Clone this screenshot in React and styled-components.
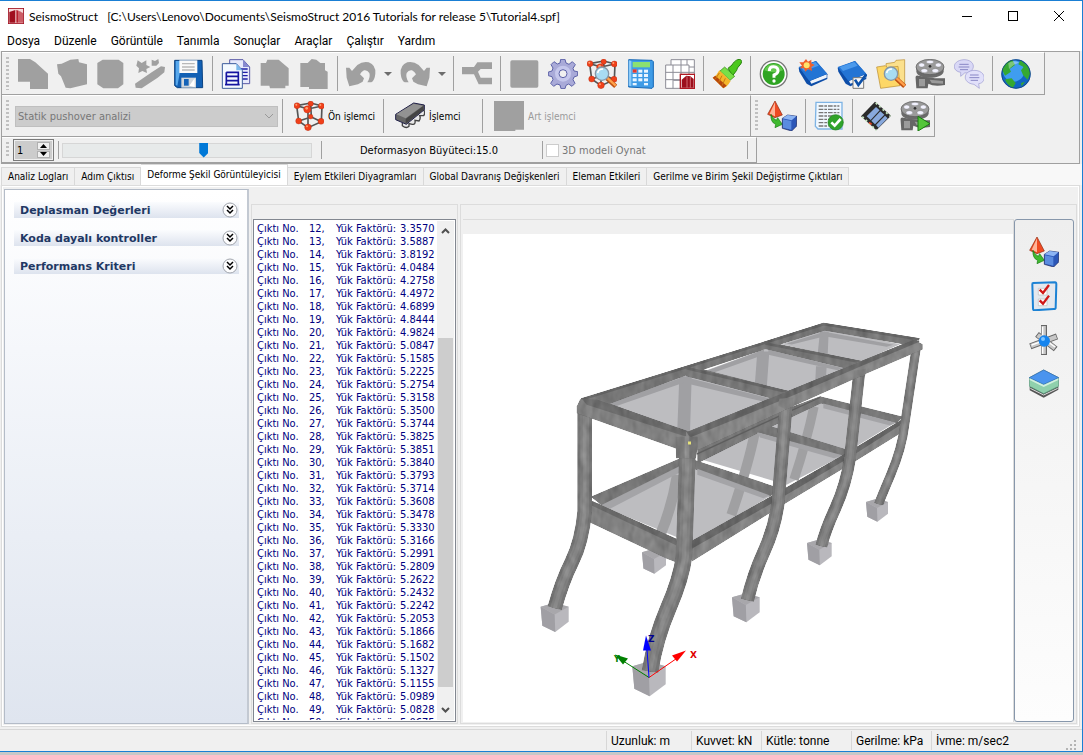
import { useState } from "react";
import styled, { createGlobalStyle } from "styled-components";

const GlobalStyle = createGlobalStyle`
  * {
    box-sizing: border-box;
  }

  body {
    margin: 0;
    background: #c8c8c8;
    color: #000;
    font-family: "DejaVu Sans Condensed", "Noto Sans", sans-serif;
    font-size: 11px;
    line-height: 13px;
  }

  button, input, select {
    font: inherit;
    color: inherit;
  }
`;

const Desktop = styled.div`
  display: flex;
  flex-direction: column;
  height: 100vh;
  padding-bottom: 3px;
`;

const Window = styled.div`
  flex: 1;
  min-height: 0;
  display: flex;
  flex-direction: column;
  background: #f0f0f0;
  border: 1px solid #1a7fd4;
  border-left: 0;
`;

const TitleBar = styled.header`
  display: flex;
  align-items: center;
  height: 30px;
  padding-left: 8px;
  background: #fff;
`;

const Title = styled.h1`
  flex: 1;
  margin: 0;
  padding-left: 5px;
  font-family: Lato, sans-serif;
  font-size: 12px;
  font-weight: 400;
  white-space: pre;
`;

const CaptionButton = styled.button`
  width: 46px;
  height: 29px;
  padding: 0;
  border: 0;
  background: none;

  svg {
    display: block;
    margin: auto;
  }
`;

const MenuBar = styled.nav`
  display: flex;
  height: 20px;
  background: #fff;
  font-family: Roboto, sans-serif;
  font-size: 12px;
`;

const MenuItem = styled.button`
  padding: 0 7px;
  border: 0;
  background: none;
`;

const ToolArea = styled.div`
  margin: 0 2px 0 1px;
  border: 1px solid #a0a0a0;
`;

const BarRow = styled.div`
  display: flex;
`;

const Bar = styled.div`
  display: flex;
  align-items: center;
  height: ${(props) => props.$height || 42}px;
  width: ${(props) => props.$width || "auto"};
  padding: 0 ${(props) => props.$end || 0}px 0 4px;
  border-top: 1px solid #fff;
  border-right: 1px solid #a0a0a0;
  border-bottom: 1px solid #a0a0a0;
`;

const Grip = styled.span`
  flex: none;
  width: 3px;
  align-self: stretch;
  margin: 4px 4px 4px 0;
  background: repeating-linear-gradient(#c0c0c0 0 2px, transparent 2px 4px);
`;

const Separator = styled.span`
  flex: none;
  width: 8px;
  align-self: stretch;
  margin: 3px 0;
  background: linear-gradient(#a0a0a0, #a0a0a0) center / 1px 100% no-repeat;
`;

const ToolButton = styled.button`
  flex: none;
  display: flex;
  align-items: center;
  justify-content: ${(props) => (props.$wide ? "flex-start" : "center")};
  gap: 4px;
  width: ${(props) => props.$wide || 39}px;
  height: 38px;
  padding: 0 0 0 ${(props) => (props.$wide ? 8 : 0)}px;
  border: 0;
  background: none;
  font-size: 10px;
  white-space: nowrap;

  &:disabled {
    color: #9a9a9a;
  }
`;

const DropArrow = styled.button`
  width: 15px;
  height: 38px;
  padding: 0;
  border: 0;
  background: none;

  &::before {
    content: "";
    display: block;
    width: 0;
    margin: auto;
    border: 4px solid transparent;
    border-top-color: #6d6d6d;
    border-bottom: 0;
  }
`;

const ComboBox = styled.div`
  position: relative;
  width: 263px;
  margin-left: 2px;

  select {
    display: block;
    width: 100%;
    height: 21px;
    padding: 0 2px;
    border: 1px solid #bfbfbf;
    border-radius: 0;
    background: #ccc;
    color: #777;
    opacity: 1;
    appearance: none;
  }

  svg {
    position: absolute;
    right: 4px;
    top: 7px;
    pointer-events: none;
  }
`;

const SpinBox = styled.div`
  display: flex;
  width: 41px;
  height: 22px;
  padding: 1px;
  border: 1px solid #7a7a7a;
  background: #ccc;
  box-shadow: inset 0 0 0 1px #f0f0f0;

  input {
    flex: 1;
    min-width: 0;
    padding: 0 2px;
    border: 0;
    background: none;
    appearance: textfield;
  }

  input::-webkit-inner-spin-button {
    display: none;
  }
`;

const SpinButtons = styled.div`
  display: grid;
  grid-template-rows: 1fr 1fr;
  gap: 1px;
  padding: 1px 2px;

  button {
    display: grid;
    place-items: center;
    width: 13px;
    padding: 0;
    border: 1px solid #b0b0b0;
    background: #f0f0f0;
  }
`;

const Slider = styled.input`
  width: 250px;
  height: 15px;
  margin: 0 5px 0 0;
  border: 1px solid #d6d6d6;
  background: #e7eaea;
  appearance: none;

  &::-webkit-slider-thumb {
    appearance: none;
    width: 9px;
    height: 15px;
    background: #0078d7;
    clip-path: polygon(0 0, 100% 0, 100% 70%, 50% 100%, 0 70%);
  }
`;

const Magnifier = styled.output`
  width: 213px;
  padding-left: 35px;
`;

const CheckLabel = styled.label`
  display: flex;
  align-items: center;
  gap: 3px;
  width: 197px;
  color: #777;

  input {
    width: 13px;
    height: 13px;
    margin: 0;
    border: 1px solid #ccc;
    background: #fff;
    appearance: none;
  }
`;

const TabStrip = styled.div`
  display: flex;
  align-items: flex-end;
  height: 21px;
  padding-left: 1px;
  background: #f8f8f8;
`;

const Tab = styled.button`
  height: ${(props) => (props.$active ? 21 : 18)}px;
  padding: 0 6px ${(props) => (props.$active ? 2 : 0)}px;
  border: 1px solid #d9d9d9;
  border-bottom: 0;
  border-left-width: ${(props) => (props.$first ? 1 : 0)}px;
  background: ${(props) => (props.$active ? "#fff" : "#f0f0f0")};
  font-size: 10px;
  white-space: nowrap;
`;

const Page = styled.main`
  flex: 1;
  min-height: 0;
  display: flex;
  gap: 2px;
  margin: 0 2px 2px 1px;
  padding: 3px 2px 2px;
  border: 1px solid #dcdcdc;
  box-shadow: inset 0 0 0 1px #fff;
`;

const SidePanel = styled.aside`
  flex: none;
  width: 245px;
  padding: 12px 8px 0 9px;
  border: 1px solid #b4bcc8;
  border-right: 2px solid #c3c9d2;
  background: linear-gradient(#fff, #f5f7fb 30%, #dfe5ef);
`;

const Section = styled.button`
  display: flex;
  align-items: center;
  justify-content: space-between;
  width: 100%;
  height: 16px;
  margin-bottom: 12px;
  padding: 0 1px 0 6px;
  border: 0;
  background: linear-gradient(#fbfcfe, #dde3ee);
  color: #1f3864;
  font-family: "DejaVu Sans", sans-serif;
  font-size: 11px;
  font-weight: 700;
`;

const Frame = styled.section`
  flex: ${(props) => (props.$width ? "none" : 1)};
  width: ${(props) => props.$width || "auto"};
  min-width: 0;
  display: flex;
  flex-direction: column;
  margin-top: 15px;
  padding: 14px ${(props) => (props.$width ? 1 : 2)}px 1px;
  border: 1px solid #dcdcdc;
`;

const ListBox = styled.div`
  flex: 1;
  min-height: 0;
  display: flex;
  border: 1px solid #828790;
  background: #fff;
  padding: 1px;
`;

const Steps = styled.ul`
  flex: 1;
  margin: 0;
  padding: 1px 0 0 2px;
  overflow: hidden;
  list-style: none;
  color: #000080;
`;

const Step = styled.li`
  display: grid;
  grid-template-columns: 52px 27px 64px 1fr;
  height: 13px;
  white-space: nowrap;
`;

const ScrollBar = styled.div`
  display: flex;
  flex-direction: column;
  align-items: center;
  width: 17px;
  padding: 7px 1px;
  background: #f0f0f0;
`;

const ScrollTrack = styled.div`
  flex: 1;
  display: flex;
  flex-direction: column;
  align-self: stretch;
  padding: 104px 0 20px;

  &::before {
    content: "";
    flex: 1;
    background: #cdcdcd;
  }
`;

const Viewer = styled.div`
  flex: 1;
  min-height: 0;
  display: flex;
`;

const Stage = styled.div`
  flex: 1;
  min-width: 0;
  display: flex;
  padding-top: 14px;
  border-top: 1px solid #dcdcdc;
  border-right: 1px solid #dcdcdc;

  svg {
    flex: 1;
    min-width: 0;
    height: 100%;
    background: #fff;
  }
`;

const ViewTools = styled.div`
  display: flex;
  flex-direction: column;
  align-items: center;
  gap: 14px;
  width: 60px;
  padding-top: 17px;
  border: 1px solid #8797ab;
  border-radius: 3px;
  background: linear-gradient(#eee, #fdfdfd);

  button {
    height: 30px;
    padding: 0;
    border: 0;
    background: none;
  }
`;

const StatusBar = styled.footer`
  display: flex;
  justify-content: flex-end;
  align-items: center;
  height: 22px;
  padding-right: 4px;
  border-top: 1px solid #d7d7d7;
  font-family: Roboto, sans-serif;
  font-size: 12px;
`;

const StatusCell = styled.span`
  width: ${(props) => props.$width}px;
  height: 19px;
  padding-left: 4px;
  border-left: 1px solid #d7d7d7;
  line-height: 20px;
  white-space: nowrap;
`;

const SizeGrip = styled.svg`
  align-self: flex-end;
`;

const grey = "#a0a0a0";

const lattice = (
  <>
    <g stroke="#555" strokeWidth="5" fill="none">
      <path d="M8 14 50 6 84 15 82 62 42 80 14 60ZM8 14 42 24 84 15M42 24V80M50 6 52 48 82 62M52 48 14 60" />
    </g>
    <g fill="#f0401a" stroke="#a82008" strokeWidth="1">
      <circle cx="9" cy="14" r="9" />
      <circle cx="50" cy="8" r="8" />
      <circle cx="82" cy="15" r="9" />
      <circle cx="40" cy="25" r="11" />
      <circle cx="14" cy="60" r="9" />
      <circle cx="50" cy="47" r="7" />
      <circle cx="81" cy="61" r="9" />
      <circle cx="42" cy="79" r="10" />
    </g>
    <g fill="#ffa070">
      <circle cx="7" cy="11" r="3" />
      <circle cx="38" cy="22" r="4" />
      <circle cx="79" cy="12" r="3" />
      <circle cx="39" cy="76" r="3" />
    </g>
  </>
);

const reel = (
  <>
    <path d="M10 50Q0 48 2 60L4 88H38L40 74Q56 84 90 78V58H60Z" fill="#666" />
    <path d="M12 60H30V82H12ZM44 62 84 66V74L50 72Z" fill="#9b9b9b" />
    <path d="M4 24V38C8 62 80 62 86 38V24Z" fill="#6b6b6b" />
    <ellipse cx="45" cy="24" rx="42" ry="23" fill="#9b9b9b" stroke="#555" strokeWidth="2" />
    <g fill="#f3f3ff" stroke="#666" strokeWidth="1">
      <ellipse cx="45" cy="9" rx="11" ry="5" />
      <ellipse cx="20" cy="18" rx="9" ry="6" />
      <ellipse cx="70" cy="18" rx="9" ry="6" />
      <ellipse cx="28" cy="35" rx="10" ry="6" />
      <ellipse cx="61" cy="35" rx="10" ry="6" />
    </g>
    <circle cx="45" cy="22" r="4" fill="#333" />
  </>
);

const lens = (
  <>
    <path d="M60 58 86 82" stroke="#c05010" strokeWidth="13" />
    <path d="M60 56 86 80" stroke="#ffa04a" strokeWidth="7" />
    <circle cx="45" cy="44" r="20" fill="#a8dcf2" stroke="#8796a4" strokeWidth="4" />
    <path d="M32 42Q34 30 48 30" stroke="#fff" strokeWidth="5" fill="none" />
  </>
);

const book = (
  <>
    <path d="M2 26 54 6 88 46 88 60 40 82 26 74 4 38Z" fill="#0d4da8" />
    <path d="M36 66 86 46V56L40 74Z" fill="#eef3fa" />
    <path d="M2 24 54 6 88 44 34 66Z" fill="#2374d4" />
    <path d="M8 24 52 9 62 20 18 36Z" fill="#4c9aec" />
  </>
);

const backArrow = (
  <path
    fill={grey}
    d="M0 26H10L18 36 34 18Q50 6 68 10 90 18 88 44 86 64 76 70H64Q74 54 70 42 64 32 54 34 46 38 42 46L54 58 50 68 36 76 10 82 2 56Z"
  />
);

const icons = {
  newFile: <path fill={grey} d="M0 0H36L52 10 90 44V90H36V68H0Z" />,
  openFile: <path fill={grey} d="M0 16 14 14 40 2 64 0 66 10 90 16V76L40 88 26 86 12 52 4 44Z" />,
  database: <path fill={grey} d="M4 12 20 2H68L82 12V76L66 88H22L4 76Z" />,
  wizard: (
    <path
      fill={grey}
      d="M8 4 20 12 34 4 34 18 46 24 34 30 36 42 22 36 10 42 12 28 4 20ZM50 2 60 6 70 0 72 12 64 20 50 20ZM78 22 90 24 88 40 68 56 20 88 2 86 0 74 50 40Z"
    />
  ),
  save: (
    <>
      <path d="M2 4H84L86 86H10L2 80Z" fill="#1260b4" stroke="#0b4280" strokeWidth="3" />
      <path d="M5 6H24L10 80 5 78Z" fill="#58a8ec" />
      <path d="M16 4H70V42H16Z" fill="#fafafa" />
      <path d="M24 14H62M24 24H62M24 33H62" stroke="#b9b9b9" strokeWidth="4" />
      <path d="M22 56H66V86H22Z" fill="#d0d6dc" />
      <path d="M30 60H44V80H30Z" fill="#1463b8" />
      <path d="M46 80 62 58V84Z" fill="#fff" />
    </>
  ),
  copyDocs: (
    <>
      <path d="M26 2H66L86 24V74H26Z" fill="#e7e9fb" stroke="#5a5aa6" strokeWidth="3" />
      <path d="M66 2V24H86Z" fill="#8789cf" />
      <path d="M58 30H80M58 40H80M58 50H80M58 60H80" stroke="#2020a8" strokeWidth="4" />
      <path d="M4 14H46L64 34V88H4Z" fill="#f4faff" stroke="#3c5c9c" strokeWidth="3" />
      <path d="M46 14V34H64Z" fill="#7cb8ec" />
      <path d="M16 40H52V78M16 40V78M16 52H52M16 65H52M12 77H56" stroke="#1414a0" strokeWidth="5" fill="none" />
    </>
  ),
  pasteA: <path fill={grey} d="M2 12H18L22 2H56L86 28V80H76V88L30 88 28 80H2Z" />,
  pasteB: <path fill={grey} d="M4 12H26L38 0 52 2 64 12H78V34L86 38V90H30V84H4Z" />,
  undo: backArrow,
  redo: <g transform="translate(90 0) scale(-1 1)">{backArrow}</g>,
  tree: <path fill={grey} d="M0 24H36L46 10H90V30H56L48 38 56 56H90V76H50L36 46H0Z" />,
  block: <rect fill={grey} x="4" y="4" width="84" height="82" rx="5" />,
  gear: (
    <>
      <path
        d="M36 12 38 1H51L54 12 63 16 73 8 82 17 75 28 78 36 89 38V50L78 54 75 62 81 73 72 82 62 75 54 79 51 89H39L36 78 27 75 17 82 8 73 15 62 12 53 1 50V39L12 36 15 27 9 17 18 8 28 15Z"
        fill="#a9aad8"
        stroke="#5d62a8"
        strokeWidth="3"
      />
      <circle cx="45" cy="44" r="24" fill="#c5c7ec" />
      <circle cx="45" cy="44" r="12" fill="#f0f0f0" stroke="#5d62a8" strokeWidth="3" />
    </>
  ),
  lattice,
  latticeZoom: (
    <>
      {lattice}
      {lens}
    </>
  ),
  calculator: (
    <>
      <path d="M8 2 78 4 82 8V84L78 88 8 84Z" fill="#3e9be6" stroke="#1667b4" strokeWidth="3" />
      <path d="M8 4 16 6V82L8 80Z" fill="#8ccbfa" />
      <path d="M20 9H72V25H20Z" fill="#8ce070" />
      <g fill="#e9f5ff">
        {[40, 53, 66].map((y) =>
          [20, 37, 54].map((x) => <rect key={x + "-" + y} x={x} y={y - 8} width="12" height="9" />)
        )}
        <rect x="20" y="72" width="12" height="7" />
        <rect x="54" y="72" width="12" height="7" />
      </g>
      <rect x="20" y="31" width="12" height="10" fill="#e0372c" />
    </>
  ),
  sheet: (
    <>
      <path d="M18 2H88V44H44V88H2V18H18Z" fill="#fff" />
      <path
        d="M18 2H88V50M18 2V18M2 18H72V46M2 18V88H46M2 40H88M2 62H46M24 18V88M48 2V50M66 2V18M88 24H72M25 64H46"
        fill="none"
        stroke="#8c8c96"
        strokeWidth="3"
      />
      <rect x="46" y="46" width="43" height="42" fill="#fff" stroke="#b01822" strokeWidth="4" />
      <path d="M50 62 64 50 76 52 86 60V86H50Z" fill="#9c0f1c" />
      <path d="M66 52V86M76 54V86" stroke="#ee9aa0" strokeWidth="2" />
    </>
  ),
  brush: (
    <>
      <path d="M48 28 60 18C70 0 88-4 89 8 88 18 74 24 74 34L62 50Z" fill="#4cc81e" stroke="#27820c" strokeWidth="3" />
      <path d="M38 24 68 52 54 64 24 36Z" fill="#79e048" stroke="#27820c" strokeWidth="2" />
      <path d="M22 34 56 66C48 80 42 84 34 88L2 56C12 52 16 44 22 34Z" fill="#f4b62a" />
      <path d="M10 50 44 80 34 88 2 56Z" fill="#b8470c" />
      <path d="M22 42 10 60M30 50 20 70M40 58 30 80" stroke="#c87812" strokeWidth="3" />
    </>
  ),
  help: (
    <>
      <circle cx="44" cy="45" r="40" fill="#fdfdfd" stroke="#777" strokeWidth="4" />
      <circle cx="44" cy="45" r="33" fill="#2fa423" />
      <path d="M16 34A30 30 0 0 1 72 34Q44 46 16 34Z" fill="#63c94e" />
      <path d="M31 36Q31 22 44 23 58 24 57 37 55 44 45 48V56" stroke="#fff" strokeWidth="9" fill="none" />
      <circle cx="45" cy="66" r="5" fill="#fff" />
    </>
  ),
  bookNew: (
    <>
      {book}
      <path d="M24 0 30 8 40 2 40 13 50 18 40 24 42 36 30 30 22 38 18 28 6 28 12 20 4 10 16 10Z" fill="#f0602a" />
      <circle cx="26" cy="19" r="9" fill="#ffe36a" />
    </>
  ),
  bookCheck: (
    <>
      {book}
      <path d="M48 56H80V88H48Z" fill="#f6f6f6" stroke="#777" strokeWidth="3" />
      <path d="M54 62 64 78 88 46" fill="none" stroke="#0c50a8" strokeWidth="8" />
    </>
  ),
  folderFind: (
    <>
      <path d="M30 14 56 10 60 4 86 2V76H34Z" fill="#fbe08c" stroke="#b88a2a" strokeWidth="2" />
      <path d="M2 24 28 20 34 26 66 22 72 80 14 88Z" fill="#fdd766" stroke="#b88a2a" strokeWidth="2" />
      {lens}
    </>
  ),
  reel,
  reelPlay: (
    <>
      {reel}
      <path d="M54 46 90 68 54 90Z" fill="#54c63a" stroke="#187a10" strokeWidth="3" />
    </>
  ),
  chat: (
    <>
      <path d="M30 2C66 2 68 40 32 42L20 52V40C-8 36-6 4 30 2Z" fill="#d9d8f6" stroke="#9a98d0" strokeWidth="2" />
      <path d="M60 34C98 34 98 72 74 74L76 88 60 76C24 72 26 36 60 34Z" fill="#e1e0fa" stroke="#9a98d0" strokeWidth="2" />
      <path d="M16 16H44M14 24H46M18 32H42M48 48H74M46 56H76M50 64H72" stroke="#8886c4" strokeWidth="3" />
    </>
  ),
  globe: (
    <>
      <circle cx="45" cy="45" r="44" fill="#1266c4" />
      <circle cx="38" cy="36" r="32" fill="#3f9df0" />
      <path d="M34 2Q10 8 4 34L12 50 30 38 26 30 42 18ZM58 4 80 20 88 42 80 62 66 48 60 34 68 24 52 16ZM16 60 32 58 44 72 36 86Q18 78 12 62ZM60 72 72 68 62 82Z" fill="#35a832" />
      <path d="M22 12Q40 2 54 12 38 14 24 30Z" fill="#fff" opacity=".35" />
      <circle cx="45" cy="45" r="43" fill="none" stroke="#173d70" strokeWidth="2" />
    </>
  ),
  chip: (
    <>
      <path d="M22 66V74Q34 84 42 76V68L52 70Q62 72 60 58L72 60Q78 52 74 44L86 44Q92 36 86 26" fill="#e8e8e8" stroke="#444" strokeWidth="4" />
      <path d="M2 40 56 6 88 12V26L34 70 2 56Z" fill="#666" stroke="#20204a" strokeWidth="3" />
      <path d="M4 40 56 8 84 14 32 52Z" fill="#929292" />
      <path d="M32 54V68L86 26V14Z" fill="#444" />
    </>
  ),
  post: <path fill={grey} d="M0 0H90V86H64V90H0Z" />,
  shapes: (
    <>
      <path d="M24 0 46 42 24 50 2 40Z" fill="#ef4a22" stroke="#8e2a10" strokeWidth="2" />
      <path d="M24 4V46L8 38Z" fill="#ffb398" />
      <path d="M12 40Q16 52 28 58L32 50 46 70 24 80 26 70Q10 64 12 40Z" fill="#3fb92f" stroke="#157a10" strokeWidth="2" />
      <path d="M46 52 62 42 90 46 88 76 74 90 46 82Z" fill="#2c57b8" stroke="#14205c" strokeWidth="2" />
      <path d="M46 52 74 58 88 46 62 42Z" fill="#8cb4f4" />
      <path d="M48 55 73 60V86L48 80Z" fill="#5b8ce0" />
    </>
  ),
  report: (
    <>
      <path d="M6 4H84V84H12L4 76Z" fill="#f0f8ff" stroke="#7fb4e4" strokeWidth="4" />
      <path d="M14 15H76M14 25H76M14 35H76M14 45H60M14 55H48M14 65H46M14 75H44" stroke="#777" strokeWidth="4" strokeDasharray="14 3 8 3" />
      <circle cx="65" cy="64" r="23" fill="#2fa32a" stroke="#1d7c1a" strokeWidth="2" />
      <path d="M52 64 62 74 80 54" stroke="#fff" strokeWidth="8" fill="none" />
    </>
  ),
  film: (
    <>
      <path d="M0 46 42 2 90 44 46 88Z" fill="#2a2a2a" />
      <path d="M17 46 45 18 56 28 29 57ZM31 59 58 31 70 41 42 70ZM45 72 72 44 80 52 52 80Z" fill="#88a8dc" />
      <path d="M4 47 46 88M44 6 88 46" stroke="#c8e8c0" strokeWidth="5" strokeDasharray="6 8" />
      <path d="M24 64 32 70" stroke="#e04020" strokeWidth="5" />
    </>
  ),
  checklist: (
    <>
      <path d="M12 6 78 4Q82 4 82 10L80 80Q80 84 74 84L16 88Q12 88 12 82L10 10Q10 6 12 6Z" fill="#e4e8ee" stroke="#1c82d4" strokeWidth="6" />
      <path d="M28 22H54V42H28ZM28 54H54V74H28Z" fill="#fff" stroke="#bbb" strokeWidth="2" />
      <path d="M32 26 42 36 60 12M32 58 42 68 60 44" fill="none" stroke="#d01818" strokeWidth="7" />
    </>
  ),
  node: (
    <>
      <g stroke="#666" strokeWidth="18">
        <path d="M45 0V90M4 64 84 34M24 28 80 72" />
      </g>
      <g stroke="#c8c8c8" strokeWidth="13">
        <path d="M44 3V87M6 63 82 35M26 30 78 70" />
      </g>
      <path d="M41 5V30M41 66V86M8 60 30 52M56 50 78 66" stroke="#fff" strokeWidth="4" />
      <circle cx="46" cy="48" r="17" fill="#1584ee" />
      <circle cx="42" cy="42" r="6" fill="#7cc4ff" />
    </>
  ),
  layers: (
    <>
      <path d="M2 54 44 34 88 54V62L44 86 2 64Z" fill="#555" />
      <path d="M4 58 44 78 86 58" fill="none" stroke="#ddd" strokeWidth="3" />
      <path d="M1 26 44 3 89 26V52L44 74 1 52Z" fill="#8fd0ac" stroke="#4f8b70" strokeWidth="2" />
      <path d="M1 26 44 3 89 26 44 46Z" fill="#4a94ee" stroke="#2e66b8" strokeWidth="2" />
      <path d="M2 28V33L44 54 88 33V28L44 48Z" fill="#d3f0df" />
    </>
  ),
};

const Icon = ({ name }) => (
  <svg width="30" height="30" viewBox="0 0 90 90" aria-hidden="true">
    {icons[name]}
  </svg>
);

const mainTools = [
  ["newFile", "Yeni", true],
  ["openFile", "Aç", true],
  ["database", "Veri", true],
  ["wizard", "Sihirbaz", true],
  ["save", "Kaydet"],
  "sep",
  ["copyDocs", "Kopyala"],
  ["pasteA", "Kopya", true],
  ["pasteB", "Yapıştır", true],
  "sep",
  ["undo", "Geri al", true],
  "drop",
  ["redo", "Yinele", true],
  "drop",
  "sep",
  ["tree", "Ağaç", true],
  "sep",
  ["block", "Blok", true],
  ["gear", "Ayarlar"],
  ["latticeZoom", "Modeli incele"],
  ["calculator", "Hesap makinesi"],
  ["sheet", "Tablo"],
  "sep",
  ["brush", "Görünüm"],
  "sep",
  ["help", "Yardım"],
  ["bookNew", "Yenilikler"],
  ["bookCheck", "Doğrulama"],
  ["folderFind", "Örnekler"],
  ["reel", "Videolar"],
  ["chat", "Forum"],
  "sep",
  ["globe", "Web"],
];

const viewBarTools = [
  ["shapes", "Şekil"],
  "sep",
  ["report", "Rapor"],
  "sep",
  ["film", "Film"],
  ["reelPlay", "Filmi oynat"],
];

const ToolSet = ({ tools }) =>
  tools.map((tool, index) => {
    if (tool === "sep") return <Separator key={index} />;
    if (tool === "drop") return <DropArrow key={index} aria-label="Liste" />;
    const [name, label, disabled] = tool;
    return (
      <ToolButton key={index} aria-label={label} disabled={disabled}>
        <Icon name={name} />
      </ToolButton>
    );
  });

const menus = ["Dosya", "Düzenle", "Görüntüle", "Tanımla", "Sonuçlar", "Araçlar", "Çalıştır", "Yardım"];

const tabs = [
  "Analiz Logları",
  "Adım Çıktısı",
  "Deforme Şekil Görüntüleyicisi",
  "Eylem Etkileri Diyagramları",
  "Global Davranış Değişkenleri",
  "Eleman Etkileri",
  "Gerilme ve Birim Şekil Değiştirme Çıktıları",
];

const loadFactors = [
  "3.3570", "3.5887", "3.8192", "4.0484", "4.2758", "4.4972", "4.6899", "4.8444",
  "4.9824", "5.0847", "5.1585", "5.2225", "5.2754", "5.3158", "5.3500", "5.3744",
  "5.3825", "5.3851", "5.3840", "5.3793", "5.3714", "5.3608", "5.3478", "5.3330",
  "5.3166", "5.2991", "5.2809", "5.2622", "5.2432", "5.2242", "5.2053", "5.1866",
  "5.1682", "5.1502", "5.1327", "5.1155", "5.0989", "5.0828", "5.0675",
];

const units = [
  ["Uzunluk: m", 85],
  ["Kuvvet: kN", 70],
  ["Kütle: tonne", 90],
  ["Gerilme: kPa", 80],
  ["İvme: m/sec2", 135],
];

const Footing = ({ x, y, size }) => (
  <g transform={`translate(${x} ${y}) scale(${size})`}>
    <path d="M0 14 40 2 100 14V68L52 104 6 82Z" fill="#b9b8bd" />
    <path d="M0 14 50 42 52 104 6 82Z" fill="#a09fa4" />
    <path d="M0 14 52 0 100 14 50 42Z" fill="#a8a7ab" />
  </g>
);

const Column = ({ d, width }) => (
  <g fill="none">
    <path d={d} stroke="#747474" strokeWidth={width} />
    <path d={d} stroke="#808080" strokeWidth={width * 0.6} />
    <path d={d} stroke="#898989" strokeWidth={width * 0.25} />
  </g>
);

const StructureModel = () => (
  <svg viewBox="463 234 550 485" role="img" aria-label="Deforme olmuş yapı modeli">
    <defs>
      <filter id="grain" x="-5%" y="-5%" width="110%" height="110%" colorInterpolationFilters="sRGB">
        <feTurbulence type="fractalNoise" baseFrequency="0.05 0.025" numOctaves="2" seed="4" />
        <feColorMatrix values="0.5 0.5 0 0 0  0.5 0.5 0 0 0  0.5 0.5 0 0 0  0 0 0 0 1" result="noise" />
        <feComposite in="SourceGraphic" in2="noise" operator="arithmetic" k2="1" k3="0.2" k4="-0.1" />
        <feComposite in2="SourceGraphic" operator="in" />
      </filter>
    </defs>
    <g transform="translate(560 310) scale(0.33333)">
      <Footing x="246" y="712" size="0.72" />
      <Footing x="-58" y="874" size="0.84" />
      <Footing x="217" y="1050" size="1" />
      <Footing x="516" y="846" size="0.83" />
      <Footing x="741" y="684" size="0.74" />
      <Footing x="918" y="562" size="0.66" />

      <g fill="#bdbdc0">
        <path d="M110 578 358 450 640 548 395 695Z" />
        <path d="M412 440 605 342 862 425 680 520Z" />
        <path d="M600 350 780 258 1020 325 888 405 860 425Z" />
      </g>
      <g stroke="#a0a0a2" fill="none">
        <path d="M352 490Q335 590 300 672" strokeWidth="32" />
        <path d="M584 365Q565 460 514 610" strokeWidth="30" />
        <path d="M762 285Q740 390 702 504" strokeWidth="28" />
      </g>
      <g fill="#777" filter="url(#grain)">
        <path d="M92 556 360 440V466L130 585Z" />
        <path d="M412 400 600 315 700 284 780 254 800 268 600 362 412 456Z" />
        <path d="M780 254 1030 316 1010 335 775 274Z" />
        <path d="M580 345 605 336 880 420 850 435 590 362Z" />
        <path d="M400 444 660 530 630 556 400 472Z" />
      </g>
      <g fill="#a4a4a7">
        <path d="M120 583 358 464V484L150 592Z" />
        <path d="M412 472 630 552 610 560 412 490Z" />
        <path d="M592 362 850 432 822 440 600 378Z" />
        <path d="M790 276 1008 334 990 342 790 290Z" />
      </g>
      <path d="M410 428 600 340 780 258" fill="none" stroke="#5e5e5e" strokeWidth="4" />
      <g filter="url(#grain)">
        <path d="M70 570 95 568 355 690V755L320 742 72 625Z" fill="#808080" />
        <path d="M78 574 100 570 350 682 350 702Z" fill="#686868" />
        <path d="M395 690 640 552 860 425 1040 320 1046 350 885 450 670 580 396 750Z" fill="#848484" />
        <path d="M395 688 640 550 860 424 1035 318 1038 330 865 440 645 570 395 712Z" fill="#656565" />
      </g>

      <g fill="#bdbdc0">
        <path d="M125 285 378 190 650 262 385 362Z" />
        <path d="M430 180 620 110 860 168 685 242Z" />
        <path d="M665 98 800 52 1020 98 900 152Z" />
      </g>
      <g fill="#a0a0a3">
        <path d="M358 195H395L390 362 352 352Z" />
        <path d="M592 120H628L620 232 584 225Z" />
        <path d="M780 60H806L803 132 773 128Z" />
        <path d="M768 164H800L798 196 766 206Z" />
        <path d="M130 280 375 195V212L150 290ZM390 200 640 264 618 272 390 218ZM440 178 612 115V130L460 184ZM625 115 850 170 832 176 625 130ZM680 96 795 60V74L695 99ZM802 62 1000 100 980 106 802 76Z" />
      </g>
      <g filter="url(#grain)">
        <Column d="M74 290V600Q66 690 36 750T-16 890" width="44" />
        <Column d="M1070 100 1034 340Q1026 410 992 490T956 578" width="28" />
        <Column d="M898 180 870 440Q858 520 826 590T784 704" width="36" />
        <Column d="M678 280 654 575Q644 650 612 720T562 866" width="40" />
        <Column d="M384 376 372 735Q364 800 325 890T270 1080" width="50" />
      </g>
      <g fill="#777" filter="url(#grain)">
        <path d="M58 264 375 164 612 91 790 34 806 54 620 112 378 192 130 284 108 270Z" />
        <path d="M375 164 400 166 690 240 645 264 378 194Z" />
        <path d="M612 91 640 94 910 150 860 172 612 112Z" />
        <path d="M788 34 1080 80 1050 102 796 58Z" />
        <path d="M64 264 376 168 614 94 792 38 1078 84M380 170 684 242M616 96 902 152" fill="none" stroke="#656565" strokeWidth="8" />
        <path d="M50 285 60 264 110 262 385 362 380 420 345 410 50 305Z" fill="#808080" />
        <path d="M66 262 112 264 388 360 386 378 80 280Z" fill="#6a6a6a" />
        <path d="M378 362 680 240 900 150 1062 84 1088 98V114L915 188 700 284 410 418 380 418Z" fill="#858585" />
        <path d="M380 362 680 240 900 150 1062 84 1080 90 908 162 690 256 390 378Z" fill="#676767" />
        <path d="M655 282 658 262 700 258 698 286 678 294ZM880 202 882 178 918 172 916 192Z" fill="#7e7e7e" />
        <path d="M347 376H413V404L408 440H348Z" fill="#767676" />
        <path d="M374 374H388V440H374Z" fill="#8a8a8a" />
      </g>
      <rect x="384" y="390" width="9" height="9" fill="#e6e27a" />
    </g>

    <g fontFamily="DejaVu Sans, sans-serif" fontSize="9" fontWeight="700">
      <path d="M649 676 678 656" stroke="#f00" />
      <path d="M686 649 677 660 672 654Z" fill="#f00" />
      <text x="690" y="656" fill="#e00000">X</text>
      <path d="M649 676 624 660" stroke="#008000" />
      <text x="614" y="660" fill="#008000" fontSize="8">Y</text>
      <path d="M615 653 628 657 623 663Z" fill="#008000" />
      <path d="M649 676 647 648" stroke="#00f" />
      <path d="M646 634 651 649H643Z" fill="#00f" />
      <text x="648" y="640" fill="#000090">Z</text>
    </g>
  </svg>
);

const App = () => {
  const [activeTab, setActiveTab] = useState(2);
  const [step, setStep] = useState(1);
  const [scale, setScale] = useState(57);

  return (
    <>
      <GlobalStyle />
      <Desktop>
        <Window>
          <TitleBar>
            <svg width="16" height="16" viewBox="0 0 48 48" aria-hidden="true">
              <rect x="1" y="1" width="46" height="46" fill="#f6dcdc" stroke="#a01020" strokeWidth="3" />
              <path d="M4 12 22 6V44H4Z" fill="#a00f1e" />
              <path d="M25 6 32 8V44H25ZM34 9 38 11V44H34ZM40 12 44 15V44H40Z" fill="#b8202e" />
            </svg>
            <Title>
              {"SeismoStruct   [C:\\Users\\Lenovo\\Documents\\SeismoStruct 2016 Tutorials for release 5\\Tutorial4.spf]"}
            </Title>
            <CaptionButton aria-label="Simge durumuna küçült">
              <svg width="10" height="10">
                <path d="M0 5.5H10" stroke="#000" />
              </svg>
            </CaptionButton>
            <CaptionButton aria-label="Ekranı kapla">
              <svg width="10" height="10">
                <rect x="0.5" y="0.5" width="9" height="9" fill="none" stroke="#000" />
              </svg>
            </CaptionButton>
            <CaptionButton aria-label="Kapat">
              <svg width="10" height="10">
                <path d="M0 0 10 10M10 0 0 10" stroke="#000" />
              </svg>
            </CaptionButton>
          </TitleBar>
          <MenuBar>
            {menus.map((menu) => (
              <MenuItem key={menu}>{menu}</MenuItem>
            ))}
          </MenuBar>

          <ToolArea>
            <BarRow>
              <Bar $height={43} $end={9}>
                <Grip />
                <ToolSet tools={mainTools} />
              </Bar>
            </BarRow>
            <BarRow>
              <Bar $width="749px">
                <Grip />
                <ComboBox>
                  <select aria-label="Analiz tipi" disabled>
                    <option>Statik pushover analizi</option>
                  </select>
                  <svg width="10" height="7" aria-hidden="true">
                    <path d="M1 1 5 5 9 1" fill="none" stroke="#999" />
                  </svg>
                </ComboBox>
                <Separator />
                <ToolButton $wide={93}>
                  <Icon name="lattice" />
                  Ön işlemci
                </ToolButton>
                <Separator />
                <ToolButton $wide={91}>
                  <Icon name="chip" />
                  İşlemci
                </ToolButton>
                <Separator />
                <ToolButton $wide={120} disabled>
                  <Icon name="post" />
                  Art işlemci
                </ToolButton>
              </Bar>
              <Bar>
                <Grip />
                <ToolSet tools={viewBarTools} />
              </Bar>
            </BarRow>
            <BarRow>
              <Bar $height={26} $width="755px">
                <Grip />
                <SpinBox>
                  <input
                    type="number"
                    aria-label="Çıktı adımı"
                    value={step}
                    onChange={(e) => setStep(Number(e.target.value))}
                  />
                  <SpinButtons>
                    <button aria-label="Artır" onClick={() => setStep(step + 1)}>
                      <svg width="7" height="4">
                        <path d="M0 4 3.5 0 7 4Z" />
                      </svg>
                    </button>
                    <button aria-label="Azalt" onClick={() => setStep(step - 1)}>
                      <svg width="7" height="4">
                        <path d="M0 0 3.5 4 7 0Z" />
                      </svg>
                    </button>
                  </SpinButtons>
                </SpinBox>
                <Separator />
                <Slider
                  type="range"
                  aria-label="Deformasyon büyüteci"
                  value={scale}
                  onChange={(e) => setScale(Number(e.target.value))}
                />
                <Separator />
                <Magnifier>Deformasyon Büyüteci:15.0</Magnifier>
                <Separator />
                <CheckLabel>
                  <input type="checkbox" disabled />
                  3D modeli Oynat
                </CheckLabel>
                <Separator />
              </Bar>
            </BarRow>
          </ToolArea>

          <TabStrip role="tablist">
            {tabs.map((tab, index) => (
              <Tab
                key={tab}
                role="tab"
                aria-selected={index === activeTab}
                $first={index === 0}
                $active={index === activeTab}
                onClick={() => setActiveTab(index)}
              >
                {tab}
              </Tab>
            ))}
          </TabStrip>

          <Page>
            <SidePanel>
              {["Deplasman Değerleri", "Koda dayalı kontroller", "Performans Kriteri"].map((name) => (
                <Section key={name}>
                  {name}
                  <svg width="16" height="16" aria-hidden="true">
                    <circle cx="8" cy="8" r="7" fill="#fdfdfe" stroke="#a0a4ac" />
                    <path d="M5 4 8 7 11 4M5 8 8 11 11 8" fill="none" stroke="#000" strokeWidth="1.5" />
                  </svg>
                </Section>
              ))}
            </SidePanel>

            <Frame $width="207px">
              <ListBox>
                <Steps>
                  {loadFactors.map((factor, index) => (
                    <Step key={index}>
                      <span>Çıktı No.</span>
                      <span>{index + 12},</span>
                      <span>Yük Faktörü:</span>
                      <span>{factor}</span>
                    </Step>
                  ))}
                </Steps>
                <ScrollBar aria-hidden="true">
                  <svg width="9" height="6">
                    <path d="M1 5 4.5 1.5 8 5" fill="none" stroke="#505050" strokeWidth="2" />
                  </svg>
                  <ScrollTrack />
                  <svg width="9" height="6">
                    <path d="M1 1 4.5 4.5 8 1" fill="none" stroke="#505050" strokeWidth="2" />
                  </svg>
                </ScrollBar>
              </ListBox>
            </Frame>

            <Frame>
              <Viewer>
                <Stage>
                  <StructureModel />
                </Stage>
                <ViewTools>
                  <button aria-label="Şekil ayarları">
                    <Icon name="shapes" />
                  </button>
                  <button aria-label="Kontrol listesi">
                    <Icon name="checklist" />
                  </button>
                  <button aria-label="Düğüm noktaları">
                    <Icon name="node" />
                  </button>
                  <button aria-label="Katmanlar">
                    <Icon name="layers" />
                  </button>
                </ViewTools>
              </Viewer>
            </Frame>
          </Page>

          <StatusBar>
            {units.map(([text, width]) => (
              <StatusCell key={text} $width={width}>
                {text}
              </StatusCell>
            ))}
            <SizeGrip width="12" height="12" aria-hidden="true">
              <path d="M8 1h2v2h-2zM4 5h2v2h-2zM8 5h2v2h-2zM0 9h2v2h-2zM4 9h2v2h-2zM8 9h2v2h-2z" fill="#b4b4b4" />
            </SizeGrip>
          </StatusBar>
        </Window>
      </Desktop>
    </>
  );
};

export default App;
